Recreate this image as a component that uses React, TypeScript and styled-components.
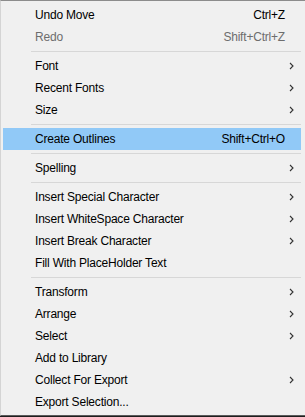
import React from "react";
import styled, { createGlobalStyle } from "styled-components";

const GlobalStyle = createGlobalStyle`
  html, body {
    margin: 0;
    padding: 0;
    background: #1e1e1e;
  }
  body {
    font-family: "Liberation Sans", Arial, sans-serif;
  }
`;

const Menu = styled.ul`
  list-style: none;
  margin: 0;
  padding: 3px 4px 2px 2px;
  width: 305px;
  height: 416px;
  box-sizing: border-box;
  background: #f0f0f0;
  border-top: 1px solid #8c8c8c;
  border-left: 1px solid #d4d4d4;
  border-bottom: 1px solid #5a5a5a;
  font-size: 12px;
  letter-spacing: -0.2px;
  color: #000;
`;

const Item = styled.li<{ $active?: boolean; $disabled?: boolean }>`
  display: flex;
  align-items: center;
  height: 22px;
  padding: 0 7px 0 32px;
  background: ${({ $active }) => ($active ? "#91c9f7" : "transparent")};
  color: ${({ $disabled }) => ($disabled ? "#6d6d6d" : "#000")};
  white-space: nowrap;
`;

const Label = styled.span`
  flex: 1;
`;

const Shortcut = styled.span`
  margin-right: 9px;
`;

const Arrow = styled.svg`
  width: 5px;
  height: 8px;
`;

const Separator = styled.li`
  height: 1px;
  margin: 3px 0 3px 28px;
  background: #d7d7d7;
`;

type Entry =
  | { sep: true }
  | {
      label: string;
      shortcut?: string;
      sub?: boolean;
      active?: boolean;
      disabled?: boolean;
    };

const entries: Entry[] = [
  { label: "Undo Move", shortcut: "Ctrl+Z" },
  { label: "Redo", shortcut: "Shift+Ctrl+Z", disabled: true },
  { sep: true },
  { label: "Font", sub: true },
  { label: "Recent Fonts", sub: true },
  { label: "Size", sub: true },
  { sep: true },
  { label: "Create Outlines", shortcut: "Shift+Ctrl+O", active: true },
  { sep: true },
  { label: "Spelling", sub: true },
  { sep: true },
  { label: "Insert Special Character", sub: true },
  { label: "Insert WhiteSpace Character", sub: true },
  { label: "Insert Break Character", sub: true },
  { label: "Fill With PlaceHolder Text" },
  { sep: true },
  { label: "Transform", sub: true },
  { label: "Arrange", sub: true },
  { label: "Select", sub: true },
  { label: "Add to Library" },
  { label: "Collect For Export", sub: true },
  { label: "Export Selection..." },
];

function SubArrow() {
  return (
    <Arrow viewBox="0 0 5 8">
      <polyline
        points="1,1 4,4 1,7"
        fill="none"
        stroke="#333"
        strokeWidth="1.1"
      />
    </Arrow>
  );
}

export default function App() {
  return (
    <>
      <GlobalStyle />
      <Menu>
        {entries.map((e, i) => {
          if ("sep" in e) return <Separator key={`sep-${i}`} />;
          return (
            <Item key={e.label} $active={e.active} $disabled={e.disabled}>
              <Label>{e.label}</Label>
              {e.shortcut && <Shortcut>{e.shortcut}</Shortcut>}
              {e.sub && <SubArrow />}
            </Item>
          );
        })}
      </Menu>
    </>
  );
}
